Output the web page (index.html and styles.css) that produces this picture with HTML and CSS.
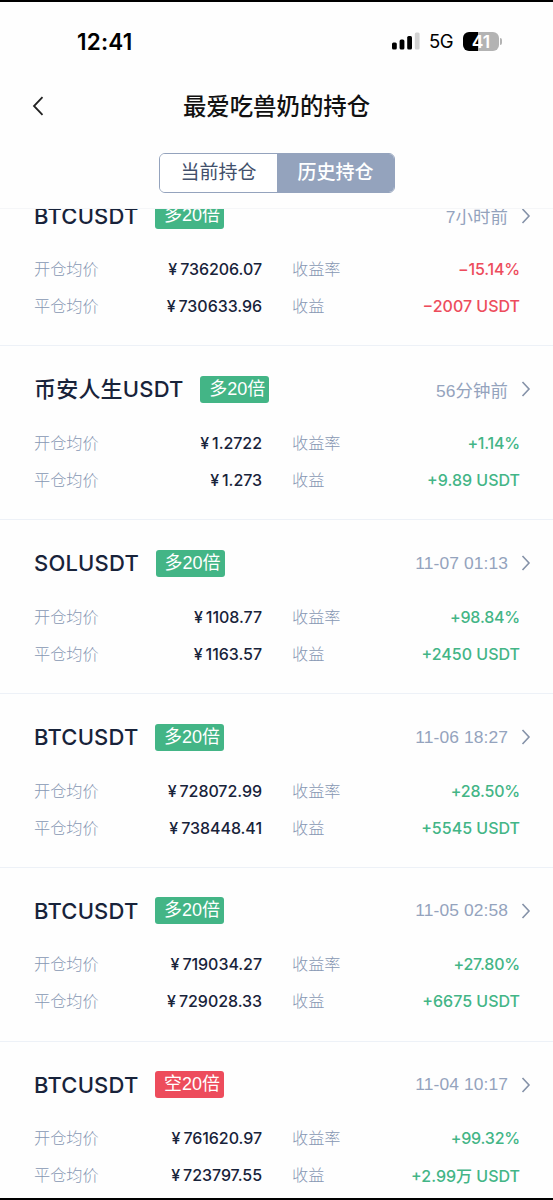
FILE: index.html
```
<!DOCTYPE html>
<html lang="zh-CN">
<head>
    <meta charset="UTF-8">
    <meta name="viewport" content="width=device-width, initial-scale=1.0">
    <title>最爱吃兽奶的持仓</title>
    <link rel="stylesheet" href="styles.css">
</head>
<body>
    <div class="page">
        <!-- 状态栏 -->
        <div class="status-bar">
            <span class="status-time">12:41</span>
            <div class="status-right">
                <svg class="signal" width="28" height="18" viewBox="0 0 28 18">
                    <rect x="0" y="10.5" width="4.8" height="7" rx="1.5" fill="#000"/>
                    <rect x="7.6" y="7.5" width="4.8" height="10" rx="1.5" fill="#000"/>
                    <rect x="15.2" y="4" width="4.8" height="13.5" rx="1.5" fill="#000"/>
                    <rect x="22.8" y="0.5" width="4.8" height="17" rx="1.5" fill="#d2d2d2"/>
                </svg>
                <span class="network">5G</span>
                <div class="battery"><span class="battery-body">41</span><span class="battery-cap"></span></div>
            </div>
        </div>

        <!-- 标题栏 -->
        <div class="nav-bar">
            <svg class="back-icon" width="12" height="20" viewBox="0 0 12 20">
                <path d="M10.5 1.2 L2 10 L10.5 18.8" fill="none" stroke="#222" stroke-width="1.8"/>
            </svg>
            <h1 class="nav-title">最爱吃兽奶的持仓</h1>
        </div>

        <div class="tabs">
            <button class="tab">当前持仓</button>
            <button class="tab active">历史持仓</button>
        </div>

        <!-- 持仓记录 -->
        <div class="list">
            <div class="record">
                <div class="record-head">
                    <span class="symbol">BTCUSDT</span>
                    <span class="tag">多20倍</span>
                    <span class="time">7小时前</span>
                    <svg class="arrow" width="10" height="16" viewBox="0 0 10 16"><path d="M1.5 1 L8 8 L1.5 15"/></svg>
                </div>
                <div class="fields">
                    <span class="label">开仓均价</span><span class="price"><i>¥</i>736206.07</span>
                    <span class="label">收益率</span><span class="profit rate down">−15.14%</span>
                    <span class="label">平仓均价</span><span class="price"><i>¥</i>730633.96</span>
                    <span class="label">收益</span><span class="profit down">−2007 USDT</span>
                </div>
            </div>
            <div class="record">
                <div class="record-head">
                    <span class="symbol">币安人生USDT</span>
                    <span class="tag">多20倍</span>
                    <span class="time">56分钟前</span>
                    <svg class="arrow" width="10" height="16" viewBox="0 0 10 16"><path d="M1.5 1 L8 8 L1.5 15"/></svg>
                </div>
                <div class="fields">
                    <span class="label">开仓均价</span><span class="price"><i>¥</i>1.2722</span>
                    <span class="label">收益率</span><span class="profit rate">+1.14%</span>
                    <span class="label">平仓均价</span><span class="price"><i>¥</i>1.273</span>
                    <span class="label">收益</span><span class="profit">+9.89 USDT</span>
                </div>
            </div>
            <div class="record">
                <div class="record-head">
                    <span class="symbol">SOLUSDT</span>
                    <span class="tag">多20倍</span>
                    <span class="time">11-07 01:13</span>
                    <svg class="arrow" width="10" height="16" viewBox="0 0 10 16"><path d="M1.5 1 L8 8 L1.5 15"/></svg>
                </div>
                <div class="fields">
                    <span class="label">开仓均价</span><span class="price"><i>¥</i>1108.77</span>
                    <span class="label">收益率</span><span class="profit rate">+98.84%</span>
                    <span class="label">平仓均价</span><span class="price"><i>¥</i>1163.57</span>
                    <span class="label">收益</span><span class="profit">+2450 USDT</span>
                </div>
            </div>
            <div class="record">
                <div class="record-head">
                    <span class="symbol">BTCUSDT</span>
                    <span class="tag">多20倍</span>
                    <span class="time">11-06 18:27</span>
                    <svg class="arrow" width="10" height="16" viewBox="0 0 10 16"><path d="M1.5 1 L8 8 L1.5 15"/></svg>
                </div>
                <div class="fields">
                    <span class="label">开仓均价</span><span class="price"><i>¥</i>728072.99</span>
                    <span class="label">收益率</span><span class="profit rate">+28.50%</span>
                    <span class="label">平仓均价</span><span class="price"><i>¥</i>738448.41</span>
                    <span class="label">收益</span><span class="profit">+5545 USDT</span>
                </div>
            </div>
            <div class="record">
                <div class="record-head">
                    <span class="symbol">BTCUSDT</span>
                    <span class="tag">多20倍</span>
                    <span class="time">11-05 02:58</span>
                    <svg class="arrow" width="10" height="16" viewBox="0 0 10 16"><path d="M1.5 1 L8 8 L1.5 15"/></svg>
                </div>
                <div class="fields">
                    <span class="label">开仓均价</span><span class="price"><i>¥</i>719034.27</span>
                    <span class="label">收益率</span><span class="profit rate">+27.80%</span>
                    <span class="label">平仓均价</span><span class="price"><i>¥</i>729028.33</span>
                    <span class="label">收益</span><span class="profit">+6675 USDT</span>
                </div>
            </div>
            <div class="record">
                <div class="record-head">
                    <span class="symbol">BTCUSDT</span>
                    <span class="tag short">空20倍</span>
                    <span class="time">11-04 10:17</span>
                    <svg class="arrow" width="10" height="16" viewBox="0 0 10 16"><path d="M1.5 1 L8 8 L1.5 15"/></svg>
                </div>
                <div class="fields">
                    <span class="label">开仓均价</span><span class="price"><i>¥</i>761620.97</span>
                    <span class="label">收益率</span><span class="profit rate">+99.32%</span>
                    <span class="label">平仓均价</span><span class="price"><i>¥</i>723797.55</span>
                    <span class="label">收益</span><span class="profit">+2.99万 USDT</span>
                </div>
            </div>
        </div>
    </div>
</body>
</html>
```
FILE: styles.css
```
* {
    box-sizing: border-box;
}

body {
    margin: 0;
    background: #fefefe;
    font-family: Inter, "Noto Sans CJK SC", sans-serif;
    color: #18233a;
}

.page {
    display: flex;
    flex-direction: column;
    height: 1200px;
    overflow: hidden;
    border-top: 2px solid #000;
    border-bottom: 2px solid #000;
}

/* 状态栏 */
.status-bar {
    display: flex;
    justify-content: space-between;
    align-items: center;
    height: 78px;
    padding: 0 51px 0 77px;
    color: #000;
}

.status-time {
    font-size: 22.5px;
    font-weight: 600;
    letter-spacing: 0.2px;
}

.status-right {
    display: flex;
    align-items: center;
}

.network {
    margin-left: 9px;
    font-size: 18.5px;
    letter-spacing: -0.5px;
}

.battery {
    display: flex;
    align-items: center;
    margin-left: 10px;
}

.battery-body {
    width: 36px;
    height: 19px;
    border-radius: 6px;
    background: linear-gradient(to right, #000 42%, #b3b3b3 42%);
    color: #fff;
    font-size: 17.5px;
    font-weight: 600;
    line-height: 19px;
    text-align: center;
}

.battery-cap {
    width: 2px;
    height: 7px;
    margin-left: 1px;
    border-radius: 0 3px 3px 0;
    background: #b3b3b3;
}

/* 标题栏 */
.nav-bar {
    display: flex;
    align-items: center;
    height: 51px;
    padding: 0 32px;
}

.nav-title {
    flex: 1;
    margin: 2px 12px 0 0;
    font-size: 23.4px;
    font-weight: 500;
    line-height: 34px;
    text-align: center;
    color: #111;
}

/* 切换按钮 */
.tabs {
    display: flex;
    flex-shrink: 0;
    width: 236px;
    height: 40px;
    margin: 22px auto 15px 159px;
    border: 1.5px solid #94a3bd;
    border-radius: 6px;
    overflow: hidden;
}

.tab {
    flex: 1;
    padding: 0 0 5px;
    border: none;
    background: #fff;
    font-family: inherit;
    font-size: 19px;
    color: #42506b;
}

.tab.active {
    background: #94a3bd;
    color: #fff;
    font-weight: 500;
}

/* 记录列表 */
.list {
    flex: 1;
    overflow: hidden;
    border-top: 1px solid #f5f6f8;
}

.record {
    height: 173.8px;
    padding: 26px 32px 0 34px;
    border-bottom: 1px solid #edf1f7;
}

.record:first-child {
    margin-top: -36.4px;
}

.record-head {
    display: flex;
    align-items: center;
    height: 34px;
    margin-right: -10px;
}

.symbol {
    font-size: 22px;
    font-weight: 500;
    line-height: 34px;
    letter-spacing: 0.2px;
}

.tag {
    width: 69px;
    height: 27px;
    margin-left: 16.5px;
    padding-left: 9px;
    border-radius: 3px;
    background: #43b586;
    color: #fff;
    font-family: "Liberation Sans", "Noto Sans CJK SC", sans-serif;
    font-size: 18px;
    line-height: 27px;
    white-space: nowrap;
}

.tag.short {
    background: #ed4c5c;
}

.time {
    margin-left: auto;
    font-family: "Liberation Sans", "Noto Sans CJK SC", sans-serif;
    font-size: 17.4px;
    letter-spacing: 0.1px;
    color: #94a3bd;
}

/* 右侧箭头与收益数值右对齐偏外 */
.arrow {
    margin-left: 13px;
}

.arrow path {
    fill: none;
    stroke: #8592a8;
    stroke-width: 1.6;
}

.fields {
    display: grid;
    grid-template-columns: 90px 138px 90px 138px;
    grid-auto-rows: 37px;
    align-items: center;
    margin-top: 18px;
    font-size: 16px;
    white-space: nowrap;
}

.fields .label:nth-child(4n + 3) {
    padding-left: 30px;
}

.label {
    padding-bottom: 2px;
    color: #8797b3;
    font-size: 16.2px;
    font-weight: 300;
}

.price,
.profit {
    text-align: right;
    font-weight: 500;
}

.price {
    letter-spacing: -0.05px;
}

.price i {
    margin-right: 3px;
    font-style: normal;
}

.profit {
    margin-right: -30px;
    color: #43b586;
}

.profit.rate {
    letter-spacing: -0.2px;
}

.profit.down {
    color: #ed4c5c;
}
```
